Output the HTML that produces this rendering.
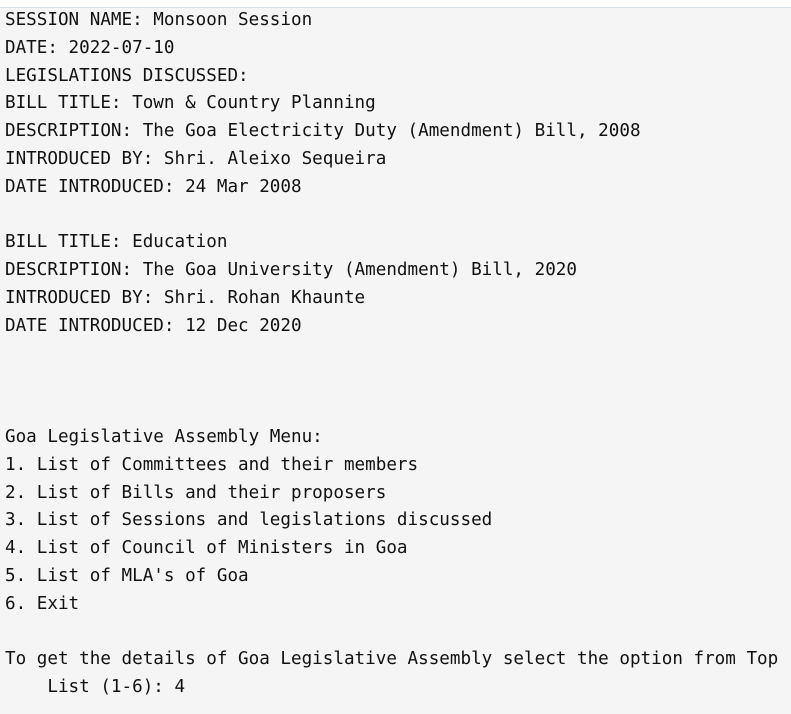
<!DOCTYPE html>
<html><head><style>
html,body{margin:0;padding:0;width:791px;height:714px;overflow:hidden;background:#f5f5f5;}
.top{height:7px;background:#fff;border-bottom:1px solid #d6e2f0;}
pre{margin:0;position:absolute;top:7px;left:5px;font-family:"DejaVu Sans Mono","Liberation Mono",monospace;font-size:17.6px;line-height:27.8px;color:#111;}
</style></head><body>
<div class="top"></div>
<pre>SESSION NAME: Monsoon Session
DATE: 2022-07-10
LEGISLATIONS DISCUSSED:
BILL TITLE: Town &amp; Country Planning
DESCRIPTION: The Goa Electricity Duty (Amendment) Bill, 2008
INTRODUCED BY: Shri. Aleixo Sequeira
DATE INTRODUCED: 24 Mar 2008

BILL TITLE: Education
DESCRIPTION: The Goa University (Amendment) Bill, 2020
INTRODUCED BY: Shri. Rohan Khaunte
DATE INTRODUCED: 12 Dec 2020



Goa Legislative Assembly Menu:
1. List of Committees and their members
2. List of Bills and their proposers
3. List of Sessions and legislations discussed
4. List of Council of Ministers in Goa
5. List of MLA's of Goa
6. Exit

To get the details of Goa Legislative Assembly select the option from Top
    List (1-6): 4</pre>
</body></html>
